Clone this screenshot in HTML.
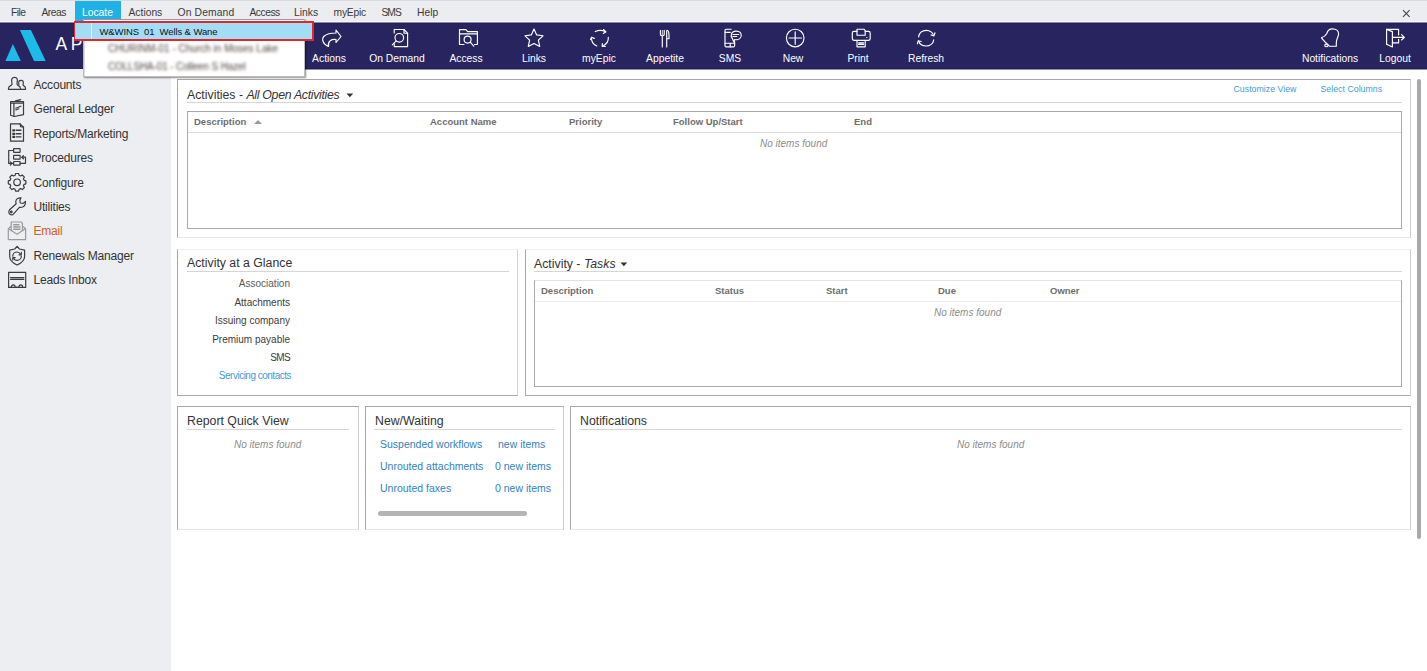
<!DOCTYPE html>
<html><head><meta charset="utf-8">
<style>
*{box-sizing:border-box}
html,body{margin:0;padding:0}
body{width:1427px;height:671px;position:relative;overflow:hidden;background:#fff;font-family:"Liberation Sans",sans-serif;color:#333}
.a{position:absolute;white-space:nowrap;line-height:1}
#menubar{position:absolute;left:0;top:0;width:1427px;height:22px;background:#ecedf0;border-top:1px solid #d9dadd;border-bottom:1px solid #f7f7f9}
.mi{position:absolute;top:7px;font-size:10.3px;color:#3a3a3a;line-height:1}
#toolbar{position:absolute;left:0;top:22px;width:1427px;height:47px;background:#28245f}
.tl{position:absolute;top:31.5px;font-size:10.3px;color:#fff;line-height:1;transform:translateX(-50%)}
.ti{position:absolute;top:6px}
#sidebar{position:absolute;left:0;top:69px;width:171px;height:602px;background:#eceef1}
.si{position:absolute;left:33.5px;font-size:12px;letter-spacing:-0.2px;color:#333;line-height:1}
.sic{position:absolute;left:7px}
.panel{position:absolute;border:1px solid;border-color:#a9a9a9 #cdcdcd #e8e8e8 #a6a6a6;background:#fff}
.ptitle{position:absolute;font-size:12.3px;color:#333;line-height:1}
.uline{position:absolute;height:1px;background:#d6d6d6}
.grid{position:absolute;border:1px solid #a9a9a9}
.gh{position:absolute;font-size:9.5px;font-weight:bold;color:#6e6e6e;line-height:1}
.nif{position:absolute;font-size:10px;font-style:italic;color:#8c8c8c;line-height:1}
.lbl{position:absolute;font-size:10px;color:#3c3c3c;line-height:1;text-align:right}
.lnk{position:absolute;font-size:11px;color:#2f82c0;line-height:1}
</style></head><body>

<div id="menubar">
  <div style="position:absolute;left:75px;top:0;width:46px;height:20px;background:#1fb1e6"></div>
  <div class="mi" style="left:11px;letter-spacing:-0.5px">File</div>
  <div class="mi" style="left:41.5px;letter-spacing:-0.5px">Areas</div>
  <div class="mi" style="left:82px;color:#fff">Locate</div>
  <div class="mi" style="left:128.5px">Actions</div>
  <div class="mi" style="left:177.5px;letter-spacing:0.15px">On Demand</div>
  <div class="mi" style="left:249.5px;letter-spacing:-0.5px">Access</div>
  <div class="mi" style="left:294px">Links</div>
  <div class="mi" style="left:333.5px;letter-spacing:-0.2px">myEpic</div>
  <div class="mi" style="left:381.5px;letter-spacing:-1px">SMS</div>
  <div class="mi" style="left:417px">Help</div>
  <svg style="position:absolute;left:1402px;top:8px" width="9" height="9"><path d="M1,1.2 L7.6,7.8 M7.6,1.2 L1,7.8" stroke="#444" stroke-width="1.1"/></svg>
</div>

<div id="toolbar">
<div style="position:absolute;left:0;top:0;width:1427px;height:1px;background:#8b89a6"></div>
<div style="position:absolute;left:0;top:1px;width:1427px;height:1px;background:#221f5a"></div>
<div style="position:absolute;left:0;top:46px;width:1427px;height:1px;background:#221e58"></div>
<div style="position:absolute;left:0;top:47px;width:1427px;height:1px;background:#9391ae"></div>
<svg width="1427" height="47" viewBox="0 22 1427 47" style="position:absolute;left:0;top:0">
 <polygon points="5.4,60.9 20.8,60.9 12.9,44" fill="#1dbbea"/>
 <polygon points="19.9,30 30.9,30 45.7,60.9 34,60.9" fill="#1dbbea"/>
 <g fill="none" stroke="#fff" stroke-width="1.15" stroke-linejoin="round" stroke-linecap="round">
  <!-- Actions -->
  <path d="M336,30 L341,36.5 L336,42.5 L336,39.5 C331.5,39 327.5,41 328.5,46.5 C322.5,44 321.5,39 324,36.2 C327,33.5 331,33 336,33 Z"/>
  <!-- On Demand -->
  <path d="M394.2,33 V29.5 H404 L407.6,33.2 V46.6 H394.2 V43.5"/>
  <path d="M404,29.5 V33.2 H407.6"/>
  <circle cx="399.3" cy="37.8" r="4.3"/>
  <path d="M396.2,40.9 L392.3,44.8"/>
  <!-- Access -->
  <path d="M464,44.5 H459.5 V29.6 H466 L467.6,31.6 H477.4 V44.5 H474.5"/>
  <path d="M459.5,33.9 H477.4"/>
  <circle cx="467.6" cy="39.6" r="3.5"/>
  <path d="M470.2,42.2 L473.8,46.2"/>
  <!-- Links star -->
  <path d="M534,29 L536.7,34.9 L543,35.8 L538.4,40.2 L539.7,46.4 L534,43.4 L528.3,46.4 L529.6,40.2 L525,35.8 L531.3,34.9 Z"/>
  <!-- myEpic -->
  <path d="M595.3,31.6 C598.5,30 602.5,30.2 605.5,31.8"/>
  <path d="M603.5,29.5 L606,31.8 L603.3,33.4"/>
  <path d="M591.5,37.5 C591.2,41 593.5,44.5 596.8,46"/>
  <path d="M590.5,39.6 L591.6,37.2 L594.3,38.4"/>
  <path d="M608.3,37.3 C608.6,41 606.2,44.6 602.5,46.2"/>
  <path d="M602.3,43.5 L602.2,46.3 L605.3,46.5"/>
  <!-- Appetite -->
  <path d="M662.3,36.6 V46.9"/>
  <path d="M660.4,30.4 V34.4 C660.4,36.2 664.2,36.2 664.2,34.4 V30.4"/>
  <path d="M662.3,30.4 V34.6" stroke-width="0.8"/>
  <path d="M666.7,46.9 V30.9 C666.7,30.5 667,30.2 667.4,30.2 C668.5,30.6 669,33 669,36 V38.7 H666.7"/>
  <!-- SMS -->
  <path d="M731.2,29.2 H726.1 C725.5,29.2 725,29.7 725,30.3 V45.7 C725,46.3 725.5,46.8 726.1,46.8 H733.5 C734.1,46.8 734.6,46.3 734.6,45.7 V41.6"/>
  <path d="M725,32.3 H730.3 M725,43.2 H734.6 M730.2,43.2 V46.8"/>
  <path d="M732.2,38.2 C730.6,36.5 730.4,31.2 736,31.1 C740.2,31 741.2,33.4 741.2,35.2 C741.2,38 738.8,39.7 736.2,39.7 C735.6,39.7 735.1,39.6 734.6,39.5 L733.9,41.9 Z"/>
  <path d="M732.9,34.5 H738.8 M732.9,36.5 H736.8"/>
  <!-- New -->
  <circle cx="795.2" cy="38" r="8.8"/>
  <path d="M789,38 H801.5 M795.2,31.8 V44.3"/>
  <!-- Print -->
  <path d="M857,35.2 V29.2 H864 L865.2,30.6 V35.2 Z"/>
  <path d="M857,31.3 H854 C853,31.3 852.3,32 852.3,33 V38.6 C852.3,39.6 853,40.3 854,40.3 H868.6 C869.6,40.3 870.2,39.6 870.2,38.6 V33 C870.2,32 869.6,31.3 868.6,31.3 H865.2"/>
  <path d="M857,40.3 V46.8 H865.2 V40.3"/>
  <path d="M858.6,42.8 H863.6 M858.6,44.4 H863.6"/>
  <path d="M866.6,37.5 h0.4" stroke-width="0.9"/>
  <!-- Refresh -->
  <path d="M918.6,36.8 C919.2,32.8 922.5,30.3 926.2,30.3 C930,30.3 933,32.8 933.6,35.5"/>
  <path d="M931,35 L934,35.9 L935,32.8"/>
  <path d="M933.7,39.8 C933.2,43.5 930,46 926.2,46 C922.5,46 919.5,43.8 918.6,41"/>
  <path d="M921.2,41.5 L918.2,40.8 L917.4,43.8"/>
  <!-- Notifications bell -->
  <path d="M1321.5,37.8 C1323.5,37 1325.8,35.5 1326.8,33.5 C1327.5,31 1329.5,28.9 1332.5,28.9 C1336,28.9 1338.6,31 1338.6,33.8 C1338.6,36 1337,38.5 1336.5,41 C1336.2,42.8 1336.3,44.5 1336.3,46.3 L1329.4,46.2 C1326.5,43.5 1323.5,40.5 1321.5,37.8 Z"/>
  <ellipse cx="1326.4" cy="45.4" rx="1.6" ry="1.3"/>
  <!-- Logout -->
  <path d="M1386.6,44.2 V29.4 H1398.6 V35"/>
  <path d="M1398.6,39.3 V42.9 H1392.4"/>
  <path d="M1386.6,29.4 L1392.4,31.6 V47 L1386.6,44.2"/>
  <path d="M1392.4,37.3 H1404.4 M1401.6,34.6 L1404.4,37.3 L1401.6,40"/>
 </g>
</svg>
<div class="a" style="left:55.5px;top:13.5px;font-size:17.5px;color:#fff;letter-spacing:3.5px">AP</div>
<div class="tl" style="left:329px">Actions</div>
<div class="tl" style="left:397px">On Demand</div>
<div class="tl" style="left:466px">Access</div>
<div class="tl" style="left:534px">Links</div>
<div class="tl" style="left:599px">myEpic</div>
<div class="tl" style="left:665px">Appetite</div>
<div class="tl" style="left:730px">SMS</div>
<div class="tl" style="left:793px">New</div>
<div class="tl" style="left:858px">Print</div>
<div class="tl" style="left:926px">Refresh</div>
<div class="tl" style="left:1330px">Notifications</div>
<div class="tl" style="left:1395px">Logout</div>
</div>

<div id="sidebar">
<svg width="171" height="602" viewBox="0 69 171 602" style="position:absolute;left:0;top:0">
 <g fill="none" stroke="#3c3c3c" stroke-width="1.2" stroke-linejoin="round" stroke-linecap="round">
  <!-- Accounts -->
  <path d="M8.5,89.4 V88.2 C8.5,86.6 10,85.8 11.4,85.1 C12.3,84.6 12.1,83.6 11.9,82.6 C11.6,81 11.6,79.6 11.9,78.8 C12.4,77.6 13.4,77.3 14.5,77.3 C15.6,77.3 16.6,77.6 17.1,78.8 C17.4,79.6 17.4,81 17.1,82.6 C16.9,83.6 16.7,84.6 17.6,85.1 C19,85.8 20.5,86.6 20.5,88.2 V89.4 Z"/>
  <path d="M18.9,84.6 C18.6,83.1 18.6,81.9 18.9,81.2 C19.3,80.5 20.1,80.4 21,80.4 C21.9,80.4 22.7,80.5 23.1,81.2 C23.4,81.9 23.4,83.1 23.1,84.6 C23,85.1 23.2,85.6 23.9,85.9 C24.9,86.4 25.5,87.1 25.5,88.2 V89.4 H20.5"/>
  <!-- General Ledger -->
  <path d="M10.6,101.6 H23.5 V114.6 L14.2,116.5 L10.6,115.3 Z"/>
  <path d="M10.6,103.2 H23.5 M13.9,103.2 V116.3"/>
  <path d="M15.6,101 L20.6,99.6" stroke-width="1.4"/>
  <path d="M15.8,108.3 L20.8,106.2 M15.8,110 L18.8,108.8"/>
  <!-- Reports -->
  <path d="M10.5,123.8 H20.1 L23.5,127.2 V141.2 H10.5 Z"/>
  <path d="M20.1,123.8 L20.6,126.6 L23.5,127.2"/>
  <path d="M12.3,130.3 H15 M12.3,133.8 H15 M12.3,136.9 H15" stroke-width="2.3" stroke-linecap="butt"/>
  <path d="M15.6,130.3 H21.4 M15.6,133.8 H21.4 M15.6,136.9 H21.4" stroke-width="1.4" stroke-linecap="butt"/>
  <!-- Procedures -->
  <rect x="13.6" y="148.7" width="6.5" height="3.7" rx="0.4"/>
  <rect x="13.6" y="155.3" width="6.5" height="3.8" rx="0.4"/>
  <rect x="13.6" y="161.5" width="6.5" height="3.7" rx="0.4"/>
  <path d="M13.6,150.5 H8.7 V163.4 H13.6 M10.4,161.9 L12,163.4 L10.4,165"/>
  <path d="M20.1,163.3 H25.5 V157.2 H21.8 M23.4,155.6 L21.7,157.2 L23.4,158.8"/>
  <!-- Configure gear -->
  <path d="M15.6,173.5 H18.6 L19.1,175.3 L20.6,176.0 L22.3,175.0 L24.4,177.1 L23.4,178.8 L24.1,180.3 L25.9,180.8 V183.8 L24.1,184.3 L23.4,185.8 L24.4,187.5 L22.3,189.6 L20.6,188.6 L19.1,189.3 L18.6,191.1 H15.6 L15.1,189.3 L13.6,188.6 L11.9,189.6 L9.8,187.5 L10.8,185.8 L10.1,184.3 L8.3,183.8 V180.8 L10.1,180.3 L10.8,178.8 L9.8,177.1 L11.9,175.0 L13.6,176.0 L15.1,175.3 Z"/>
  <circle cx="17.1" cy="182.3" r="3.3"/>
  <!-- Utilities wrench -->
  <path d="M21,197.8 C18.5,197.6 16,198.8 15.8,201.5 C15.7,202.5 15.9,203.2 16.2,203.8 L9.6,209.8 C8.4,211 8.6,213.4 10,214.3 C11.3,215.2 12.7,214.9 13.6,213.8 L19.6,207.2 C20.5,207.5 21.6,207.4 22.6,207 C24.5,206.1 25.6,204.2 25.5,201.4 L23.2,203.4 L20.2,203 L19.9,200.2 Z"/>
  <circle cx="11.3" cy="211.9" r="0.8"/>
 </g>
 <g fill="none" stroke="#9a9a9a" stroke-width="1.2" stroke-linejoin="round">
  <!-- Email -->
  <path d="M8.3,228.6 V239.6 H25.6 V228.6 L22.4,226.2 M8.3,228.6 L11.2,226.2"/>
  <path d="M11.2,231.2 V222 H21.2 L22.4,223.4 V231.2"/>
  <path d="M8.3,228.6 L17,234.2 L25.6,228.6"/>
  <path d="M13.2,224.8 H19.5 M13.2,227 H20.4 M13.2,229.2 H20.4" stroke-width="1.4"/>
 </g>
 <g fill="none" stroke="#3c3c3c" stroke-width="1.2" stroke-linejoin="round" stroke-linecap="round">
  <!-- Renewals shield -->
  <path d="M17.1,246.3 L19.5,249 L24.6,250.2 V256.5 C24.6,260.5 21,263.2 17.1,265 C13.2,263.2 9.7,260.5 9.7,256.5 V250.2 L14.7,249 Z"/>
  <path d="M20.6,254.2 C19.8,252.8 18.5,252 17,252 C14.6,252 12.8,253.9 12.8,256.2 M13.6,258.2 C14.4,259.6 15.7,260.4 17.1,260.4 C19.4,260.4 21.3,258.5 21.3,256.2"/>
  <path d="M21.3,252.4 V254.8 H19 M12.8,260 V257.6 H15.2"/>
  <!-- Leads Inbox -->
  <path d="M8.6,272.4 H25.7 V287.4 H8.6 Z"/>
  <path d="M10.6,277.7 H23.8 M10.6,279.3 H23.8" stroke-width="1.25"/>
  <path d="M8.6,287.4 H11.3 C11.6,284 15,284 15.3,287.4 H18.8 C19.1,284 22.5,284 22.8,287.4"/>
 </g>
</svg>
<div class="si" style="top:9.54px">Accounts</div>
<div class="si" style="top:34.03px">General Ledger</div>
<div class="si" style="top:58.52px">Reports/Marketing</div>
<div class="si" style="top:83.01px">Procedures</div>
<div class="si" style="top:107.5px">Configure</div>
<div class="si" style="top:131.99px">Utilities</div>
<div class="si" style="top:156.48px;color:#cf6226">Email</div>
<div class="si" style="top:180.97px">Renewals Manager</div>
<div class="si" style="top:205.46px">Leads Inbox</div>
</div>

<!-- main content -->
<div class="panel" style="left:177px;top:79px;width:1234px;height:159px"></div>
<div class="ptitle" style="left:187px;top:89px">Activities - <i style="letter-spacing:-0.3px">All Open Activities</i></div>
<svg style="position:absolute;left:345.5px;top:92.5px" width="8" height="5"><path d="M0.5,0.5 H7.2 L3.85,4.2 Z" fill="#333"/></svg>
<div class="uline" style="left:187px;top:102px;width:1215px"></div>
<div class="lnk" style="left:1233.5px;top:84.8px;font-size:8.8px;color:#3f9bd8">Customize View</div>
<div class="lnk" style="left:1320.5px;top:84.8px;font-size:8.8px;color:#3f9bd8">Select Columns</div>
<div class="grid" style="left:187px;top:111px;width:1215px;height:118px"></div>
<div class="uline" style="left:188px;top:132px;width:1213px;background:#dcdcdc"></div>
<div class="gh" style="left:194px;top:117px">Description</div>
<svg style="position:absolute;left:253px;top:119px" width="10" height="6"><path d="M1,5 H9 L5,1 Z" fill="#9a9a9a"/></svg>
<div class="gh" style="left:430px;top:117px">Account Name</div>
<div class="gh" style="left:569px;top:117px">Priority</div>
<div class="gh" style="left:673px;top:117px">Follow Up/Start</div>
<div class="gh" style="left:854px;top:117px">End</div>
<div class="nif" style="left:760px;top:139px">No items found</div>

<!-- glance -->
<div class="panel" style="left:177px;top:249px;width:341px;height:147px;border-color:#f0f0f0 #d4d4d4 #ababab #a6a6a6"></div>
<div class="ptitle" style="left:187px;top:257px">Activity at a Glance</div>
<div class="uline" style="left:187px;top:271px;width:322px"></div>
<div class="lbl" style="right:1137px;top:279px;color:#5a5a5a">Association</div>
<div class="lbl" style="right:1137px;top:298px">Attachments</div>
<div class="lbl" style="right:1137px;top:316px">Issuing company</div>
<div class="lbl" style="right:1137px;top:335px">Premium payable</div>
<div class="lbl" style="right:1137px;top:353px;letter-spacing:-0.6px">SMS</div>
<div class="lbl" style="right:1136px;top:371px;color:#3f9bd8;letter-spacing:-0.5px">Servicing contacts</div>

<!-- tasks -->
<div class="panel" style="left:525px;top:249px;width:886px;height:147px;border-color:#f0f0f0 #cdcdcd #ababab #a6a6a6"></div>
<div class="ptitle" style="left:534px;top:258px">Activity - <i>Tasks</i></div>
<svg style="position:absolute;left:619.5px;top:262px" width="8" height="5"><path d="M0.5,0.5 H7.2 L3.85,4.2 Z" fill="#333"/></svg>
<div class="uline" style="left:534px;top:271px;width:868px"></div>
<div class="grid" style="left:534px;top:280px;width:868px;height:107px;border-top-color:#e2e2e2"></div>
<div class="uline" style="left:535px;top:301px;width:866px;background:#ececec"></div>
<div class="gh" style="left:541px;top:286px">Description</div>
<div class="gh" style="left:715px;top:286px">Status</div>
<div class="gh" style="left:826px;top:286px">Start</div>
<div class="gh" style="left:938px;top:286px">Due</div>
<div class="gh" style="left:1050px;top:286px">Owner</div>
<div class="nif" style="left:934px;top:308px">No items found</div>

<!-- report quick view -->
<div class="panel" style="left:177px;top:406px;width:182px;height:124px"></div>
<div class="ptitle" style="left:187px;top:415px">Report Quick View</div>
<div class="uline" style="left:187px;top:429px;width:162px"></div>
<div class="nif" style="left:234px;top:440px">No items found</div>

<!-- new/waiting -->
<div class="panel" style="left:365px;top:406px;width:199px;height:124px"></div>
<div class="ptitle" style="left:375px;top:415px">New/Waiting</div>
<div class="uline" style="left:374px;top:429px;width:181px"></div>
<div class="lnk" style="left:380px;top:439px;font-size:10.5px">Suspended workflows</div>
<div class="lnk" style="left:498px;top:439px;font-size:10.5px">new items</div>
<div class="lnk" style="left:380px;top:461px;font-size:10.5px">Unrouted attachments</div>
<div class="lnk" style="left:495px;top:461px;font-size:10.5px">0 new items</div>
<div class="lnk" style="left:380px;top:483px;font-size:10.5px">Unrouted faxes</div>
<div class="lnk" style="left:495px;top:483px;font-size:10.5px">0 new items</div>
<div style="position:absolute;left:378px;top:511px;width:149px;height:5px;border-radius:3px;background:#b5b5b5"></div>

<!-- notifications -->
<div class="panel" style="left:570px;top:406px;width:841px;height:124px"></div>
<div class="ptitle" style="left:580px;top:415px">Notifications</div>
<div class="uline" style="left:580px;top:429px;width:822px"></div>
<div class="nif" style="left:957px;top:440px">No items found</div>

<!-- main scrollbar -->
<div style="position:absolute;left:1417px;top:79px;width:4px;height:460px;border-radius:2px;background:#a9a9a9"></div>

<!-- dropdown -->
<div style="position:absolute;left:83px;top:19px;width:222px;height:58px;background:#fff;border:1px solid #bdbdbd;border-top-color:#9c9c9c;box-shadow:1px 1px 1.5px rgba(0,0,0,0.45)"></div>
<div style="position:absolute;left:84px;top:41px;width:1px;height:35px;background:#dcdbe8"></div>
<div style="position:absolute;left:75px;top:19px;width:8px;height:2px;background:#1fb1e6"></div>
<div style="position:absolute;left:74px;top:21px;width:240px;height:20px;border:2px solid #e3262b;border-left-width:1.3px;background:#a2ddf5"></div>
<div style="position:absolute;left:91px;top:23px;width:1px;height:16px;background:#dff3fb"></div>
<div class="a" style="left:99.5px;top:27px;font-size:9.5px;color:#111;letter-spacing:-0.1px">W&amp;WINS &nbsp;01 &nbsp;Wells &amp; Wane</div>
<div class="a" style="left:108px;top:43.5px;font-size:10px;color:#4d4440;filter:blur(1.35px)">CHURINM-01 - Church in Moses Lake</div>
<div class="a" style="left:108px;top:62px;font-size:10px;color:#4d4440;filter:blur(1.4px);letter-spacing:-0.15px">COLLSHA-01 - Colleen S Hazel</div>

</body></html>
